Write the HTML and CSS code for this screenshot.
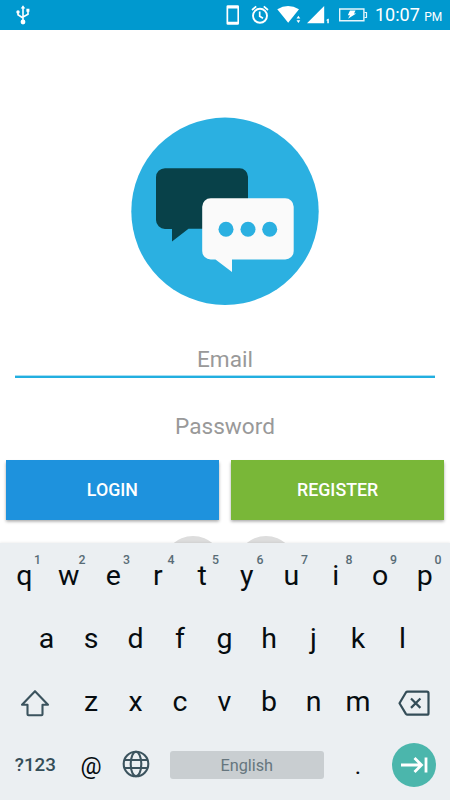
FILE: index.html
```html
<!DOCTYPE html>
<html lang="en">
<head>
<meta charset="utf-8">
<title>Login</title>
<link rel="stylesheet" href="styles.css">
</head>
<body>
<div class="screen">
  <header class="status">
    <svg class="usb" width="14" height="20" viewBox="0 0 14 20" fill="none" stroke="#fff" stroke-width="1.6">
      <path d="M7 3v13M2 7.500v2.200l5 3.300M12 5.500v3.800l-5 2.700"/>
      <path d="M7 .2L9.300 3.600H4.700zM10.400 3.800h3v3h-3z" fill="#fff" stroke="none"/>
      <circle cx="2" cy="7" r="1.700" fill="#fff" stroke="none"/><circle cx="7" cy="17" r="2.400" fill="#fff" stroke="none"/>
    </svg>
    <svg class="tray" width="150" height="30" viewBox="225 0 150 30" fill="none" stroke="#fff">
      <path fill="#fff" stroke="none" fill-rule="evenodd" d="M227.800 5.300h9.900a1.300 1.300 0 0 1 1.300 1.300v16.900a1.300 1.300 0 0 1-1.300 1.300h-9.900a1.300 1.300 0 0 1-1.300-1.300V6.600a1.300 1.300 0 0 1 1.300-1.300zM228.200 8.500v13.200h9.200V8.500z"/>
      <circle cx="260" cy="15.800" r="7" stroke-width="1.900"/>
      <path d="M259.700 11.500v4.800l3.300 2M252 10l4.200-3.600M268 10l-4.200-3.600" stroke-width="1.700"/>
      <path d="M277.300 9.200Q288 2.600 299 9.200L288.200 22.800z" fill="#fff" stroke="none"/>
      <path d="M296.500 18.500l1.900-2.700 1.900 2.700zM296.500 20.200h3.800l-1.900 2.700z" fill="#fff" stroke="none"/>
      <path d="M307 23.200L324.200 6v17.200z" fill="#fff" stroke="none"/>
      <path d="M326 20.200l2-1.500h.8v4.500h-1.500v-2.800z" fill="#fff" stroke="none"/>
      <path d="M339.700 9h24.200v11.700h-24.200z" stroke-width="1.400" opacity=".9"/>
      <path d="M364.500 12.500h2v5h-2" stroke-width="1.200" opacity=".9"/>
      <path d="M350 10.500h5.500l-1.500 3h2.200L348 18.700l2-3.500h-2.200z" fill="#fff" stroke="none"/>
    </svg>
    <span class="time">10:07 <small>PM</small></span>
  </header>

  <main class="form">
    <svg class="logo" width="188" height="188" viewBox="0 0 188 188">
      <circle cx="94" cy="94.300" r="93.700" fill="#2bb0e1"/>
      <path fill="#084149" d="M34 51.200h74.500a8.500 8.500 0 0 1 8.500 8.500v43a9 9 0 0 1-9 9H57.500L41 124.500V112h-7a9 9 0 0 1-9-9V60.200a9 9 0 0 1 9-9z"/>
      <path fill="#fafafa" d="M79.700 81.300h74.500a8.500 8.500 0 0 1 8.500 8.500V134a8.500 8.500 0 0 1-8.500 8.500H101V155l-16.500-12.500h-4.800a8.500 8.500 0 0 1-8.500-8.500V89.800a8.500 8.500 0 0 1 8.500-8.500z"/>
      <g fill="#2bb0e1"><circle cx="95" cy="112.200" r="7.500"/><circle cx="117" cy="112.200" r="7.500"/><circle cx="138.700" cy="112.200" r="7.500"/></g>
    </svg>
    <div class="field focused">Email</div>
    <div class="field">Password</div>
    <div class="buttons">
      <div class="button login">LOGIN</div>
      <div class="button register">REGISTER</div>
    </div>
    <div class="social"><i></i><i></i></div>
  </main>

  <section class="keyboard">
    <div class="row">
      <span class="key">q<sup>1</sup></span><span class="key">w<sup>2</sup></span><span class="key">e<sup>3</sup></span><span class="key">r<sup>4</sup></span><span class="key">t<sup>5</sup></span><span class="key">y<sup>6</sup></span><span class="key">u<sup>7</sup></span><span class="key">i<sup>8</sup></span><span class="key">o<sup>9</sup></span><span class="key">p<sup>0</sup></span>
    </div>
    <div class="row">
      <span class="key">a</span><span class="key">s</span><span class="key">d</span><span class="key">f</span><span class="key">g</span><span class="key">h</span><span class="key">j</span><span class="key">k</span><span class="key">l</span>
    </div>
    <div class="row">
      <span class="key wide shift">
        <svg width="30" height="30" viewBox="0 0 30 30" fill="none" stroke="#3b535e" stroke-width="2.100" stroke-linejoin="round"><path d="M15 3.200L28 16.800h-5.500v9.500q0 1-1 1h-13q-1 0-1-1v-9.500H2z"/></svg>
      </span><span class="key">z</span><span class="key">x</span><span class="key">c</span><span class="key">v</span><span class="key">b</span><span class="key">n</span><span class="key">m</span><span class="key wide erase">
        <svg width="32" height="26" viewBox="0 0 32 26" fill="none" stroke="#344d58" stroke-width="2.200" stroke-linejoin="round"><path d="M9.500 1.700h19.500q1.500 0 1.500 1.500v20q0 1.500-1.500 1.500H9.500q-1 0-1.600-.8L1.500 13.200l6.400-10.700Q8.500 1.700 9.500 1.700zM13 8.500l9.400 9.400M22.400 8.500L13 17.900"/></svg>
      </span>
    </div>
    <div class="row">
      <span class="key wide symbols">?123</span><span class="key at">@</span><span class="key globe">
        <svg width="28" height="28" viewBox="0 0 28 28" fill="none" stroke="#3b535e" stroke-width="2.100"><circle cx="14" cy="14" r="12.300"/><ellipse cx="14" cy="14" rx="5.300" ry="12.300"/><path d="M2.500 10h23M2.500 18h23"/></svg>
      </span><span class="key space"><b>English</b></span><span class="key dot">.</span><span class="key wide"><span class="enter">
        <svg width="28" height="20" viewBox="0 0 28 20" fill="none" stroke="#fff" stroke-width="2.800"><path d="M1 10h20M14.500 3l7 7-7 7M26 2.500v15"/></svg>
      </span></span>
    </div>
  </section>
</div>
</body>
</html>
```
FILE: styles.css
```css
* { box-sizing: border-box; }

body {
  margin: 0;
  font-family: Roboto, "Liberation Sans", sans-serif;
}

.screen {
  width: 450px;
  height: 800px;
  display: flex;
  flex-direction: column;
  overflow: hidden;
  background: #fff;
}

.status {
  flex: none;
  height: 30px;
  padding: 0 10px 0 16px;
  display: flex;
  align-items: center;
  background: #0099cf;
  color: #fff;
}

.tray { margin-left: auto; }

.time {
  width: 65px;
  font-size: 18px;
  line-height: 30px;
  white-space: nowrap;
  padding-top: 2px;
}

.time small { font-size: 12px; }

.form {
  height: 513px;
  overflow: hidden;
  display: flex;
  flex-direction: column;
  align-items: center;
}

.logo {
  flex: none;
  display: block;
  margin: 87px 0 37px;
}

.field {
  flex: none;
  width: 420px;
  height: 67px;
  line-height: 35px;
  font-size: 22.600px;
  text-align: center;
  color: #999;
}

.focused {
  height: 36px;
  border-bottom: 2px solid #22afe0;
  box-shadow: inset 0 -1px #a6def3;
  margin-bottom: 31px;
}

.buttons {
  flex: none;
  width: 438px;
  display: grid;
  grid-template-columns: 1fr 1fr;
  gap: 12.500px;
  margin-top: -16px;
}

.button {
  height: 60px;
  line-height: 60px;
  text-align: center;
  font-size: 17.800px;
  font-weight: 500;
  color: #fff;
  box-shadow: 0 1.500px 3px rgba(0, 0, 0, .35);
}

.login { background: #1e92dd; }
.register { background: #79b738; }

.social {
  flex: none;
  display: flex;
  gap: 13px;
  margin: 16px 0 0 9px;
}

.social i {
  width: 60px;
  height: 60px;
  border-radius: 50%;
  background: #ddd;
}

.keyboard {
  flex: none;
  height: 257px;
  padding: 1px 1px 0 0;
  background: #ebeff2;
  box-shadow: 0 -1px 2px rgba(0, 0, 0, .06);
}

.row {
  height: 63px;
  display: flex;
  justify-content: center;
}

.key {
  position: relative;
  width: 44.500px;
  display: flex;
  align-items: center;
  justify-content: center;
  font-size: 28.500px;
  color: #060c10;
}

.key sup {
  position: absolute;
  top: 9px;
  left: 32px;
  font-size: 12.300px;
  line-height: 15px;
  font-weight: 500;
  color: #586c76;
}

.wide { width: 66.750px; }

.shift, .erase { padding-top: 3px; }

.symbols {
  font-size: 18.800px;
  font-weight: 500;
  color: #344d58;
}

.at {
  font-size: 23.500px;
  padding-top: 3px;
}

.globe { padding-bottom: 1px; }

.space {
  width: 178px;
}

.space b {
  width: 154px;
  height: 28px;
  line-height: 29px;
  border-radius: 3px;
  background: #c9ced1;
  color: #66767e;
  font-size: 16.300px;
  font-weight: 400;
  text-align: center;
}

.dot {
  font-size: 24px;
  padding-top: 2px;
}

.enter {
  width: 44px;
  height: 44px;
  border-radius: 50%;
  background: #4bb6ac;
  display: flex;
  align-items: center;
  justify-content: center;
}
```
